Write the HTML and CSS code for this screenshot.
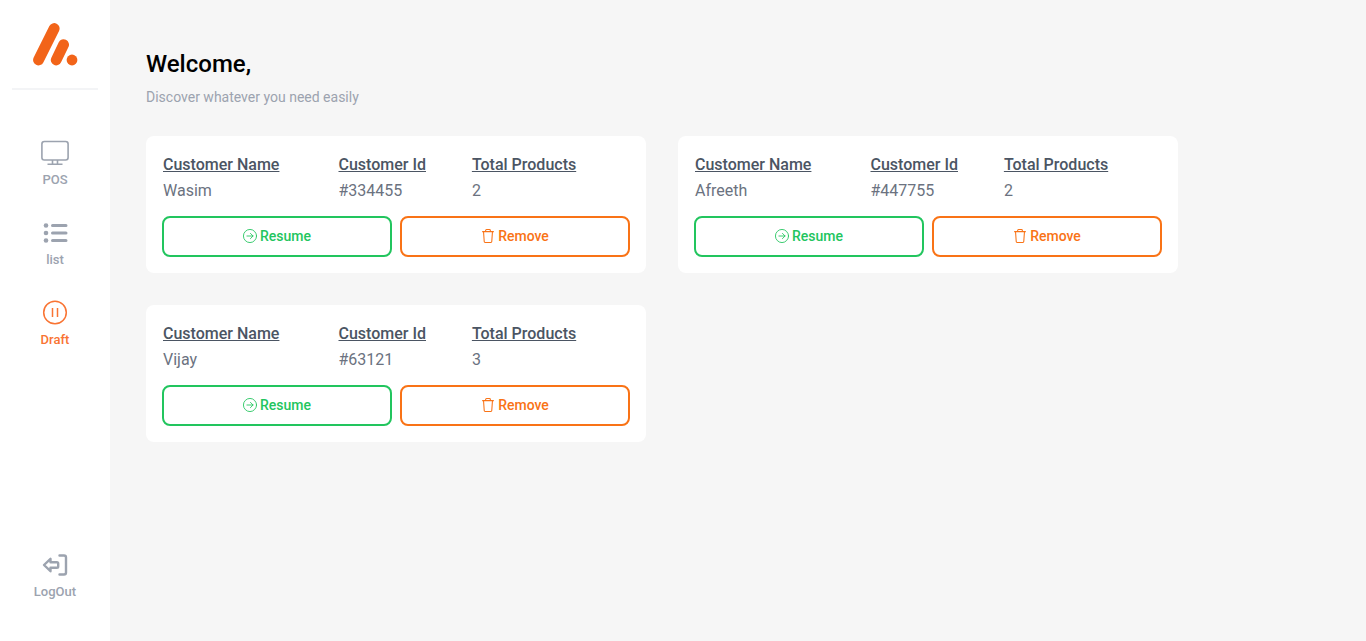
FILE: index.html
```html
<!DOCTYPE html>
<html lang="en">
<head>
<meta charset="utf-8">
<meta name="viewport" content="width=device-width, initial-scale=1">
<title>Draft</title>
<link rel="stylesheet" href="styles.css">
</head>
<body>
<svg class="sprite" aria-hidden="true">
  <symbol id="i-resume" viewBox="0 0 16 16"><g fill="none" stroke="currentColor" stroke-linecap="round" stroke-linejoin="round"><circle cx="8" cy="8" r="7.5"/><path d="M4.500 8h7M8.500 5l3 3-3 3"/></g></symbol>
  <symbol id="i-trash" viewBox="0 0 16 16"><g fill="none" stroke="currentColor" stroke-width="1.200" stroke-linecap="round" stroke-linejoin="round"><path d="M1.800 3h12.400M5.300 3V1.600a1 1 0 0 1 1-1h3.400a1 1 0 0 1 1 1V3M2.900 3l.8 11.400a1 1 0 0 0 1 1h6.600a1 1 0 0 0 1-1L13.100 3"/></g></symbol>
</svg>
<div class="app">
  <aside class="sidebar">
    <div class="brand">
      <svg class="logo" viewBox="0 0 46 44" role="img" aria-label="Logo"><g fill="none" stroke="#f26419" stroke-linecap="round" stroke-width="10.800"><path d="M6.500 37L22.200 5.500M24.200 37L31.600 21.700"/></g><circle cx="40" cy="37" r="5.400" fill="#f26419"/></svg>
    </div>
    <nav class="menu">
      <a class="item" href="#pos">
        <svg class="icon" viewBox="0 0 28 28" fill="none" stroke="currentColor" stroke-width="1.600"><rect x=".9" y="2.500" width="26.200" height="18.500" rx="2.500"/><path d="M11.500 21v4M16.500 21v4M6.500 25.200h15"/></svg>
        <span>POS</span>
      </a>
      <a class="item" href="#list">
        <svg class="icon" viewBox="0 0 28 28" fill="currentColor"><circle cx="5" cy="6.500" r="2.300"/><circle cx="5" cy="14" r="2.300"/><circle cx="5" cy="21.500" r="2.300"/><path d="M11.500 6.500h13.500M11.500 14h13.500M11.500 21.500h13.500" stroke="currentColor" stroke-width="3" stroke-linecap="round"/></svg>
        <span>list</span>
      </a>
      <a class="item active" href="#draft" aria-current="page">
        <svg class="icon" viewBox="0 0 28 28" fill="none" stroke="currentColor" stroke-width="1.500"><circle cx="14" cy="13.500" r="11.300"/><path d="M11.500 9v9M16.500 9v9"/></svg>
        <span>Draft</span>
      </a>
    </nav>
    <a class="item logout" href="#logout">
      <svg class="icon" viewBox="0 0 28 28" fill="none" stroke="currentColor" stroke-width="2.400" stroke-linejoin="round"><path d="M3 14l6.500-6.200v3.500h6.400a1.300 1.300 0 0 1 1.300 1.300v2.800a1.300 1.300 0 0 1-1.300 1.300H9.500v3.500z"/><path d="M18.500 4.500h4.500a2 2 0 0 1 2 2v15a2 2 0 0 1-2 2h-4.500" stroke-linecap="round"/></svg>
      <span>LogOut</span>
    </a>
  </aside>
  <main class="content">
    <h1 class="title">Welcome,</h1>
    <p class="subtitle">Discover whatever you need easily</p>
    <section class="cards">
      <article class="card">
        <table class="details">
          <thead><tr><th class="name">Customer Name</th><th class="id">Customer Id</th><th>Total Products</th></tr></thead>
          <tbody><tr><td>Wasim</td><td>#334455</td><td>2</td></tr></tbody>
        </table>
        <div class="actions">
          <button class="btn resume" type="button"><svg class="glyph"><use href="#i-resume"/></svg>Resume</button>
          <button class="btn remove" type="button"><svg class="glyph"><use href="#i-trash"/></svg>Remove</button>
        </div>
      </article>
      <article class="card">
        <table class="details">
          <thead><tr><th class="name">Customer Name</th><th class="id">Customer Id</th><th>Total Products</th></tr></thead>
          <tbody><tr><td>Afreeth</td><td>#447755</td><td>2</td></tr></tbody>
        </table>
        <div class="actions">
          <button class="btn resume" type="button"><svg class="glyph"><use href="#i-resume"/></svg>Resume</button>
          <button class="btn remove" type="button"><svg class="glyph"><use href="#i-trash"/></svg>Remove</button>
        </div>
      </article>
      <article class="card">
        <table class="details">
          <thead><tr><th class="name">Customer Name</th><th class="id">Customer Id</th><th>Total Products</th></tr></thead>
          <tbody><tr><td>Vijay</td><td>#63121</td><td>3</td></tr></tbody>
        </table>
        <div class="actions">
          <button class="btn resume" type="button"><svg class="glyph"><use href="#i-resume"/></svg>Resume</button>
          <button class="btn remove" type="button"><svg class="glyph"><use href="#i-trash"/></svg>Remove</button>
        </div>
      </article>
    </section>
  </main>
</div>
</body>
</html>
```
FILE: styles.css
```css
* { box-sizing: border-box; }

body {
  margin: 0;
  font-family: Roboto, "Liberation Sans", sans-serif;
  font-size: 16px;
  line-height: 24px;
  color: #6b7280;
  background: #f6f6f6;
}

.sprite { display: none; }

.app {
  display: flex;
  min-height: 100vh;
}

.sidebar {
  flex: none;
  display: flex;
  flex-direction: column;
  width: 110px;
  padding: 0 12px 39px;
  background: #fff;
}

.brand {
  display: flex;
  justify-content: center;
  padding: 23px 0 21px;
  border-bottom: 2px solid #f3f4f6;
}

.logo { width: 46px; height: 44px; }

.menu {
  display: flex;
  flex-direction: column;
  gap: 29px;
  padding-top: 49px;
}

.item {
  display: flex;
  flex-direction: column;
  align-items: center;
  gap: 3px;
  font-size: 13px;
  line-height: 20px;
  font-weight: 500;
  color: #9ca3af;
  text-decoration: none;
}

.item.active { color: #f97433; }

.icon { width: 28px; height: 28px; }

.logout { margin-top: auto; }

.content {
  flex: 1;
  min-width: 0;
  padding: 48px 36px;
}

.title {
  margin: 0;
  font-size: 24px;
  line-height: 32px;
  font-weight: 500;
  color: #000;
}

.subtitle {
  margin: 7px 0 29px;
  font-size: 14px;
  line-height: 20px;
  color: #9ca3af;
}

.cards {
  display: grid;
  grid-template-columns: repeat(auto-fill, minmax(min(100%, 420px), 1fr));
  gap: 32px;
  max-width: 1032px;
}

.card {
  padding: 16px;
  background: #fff;
  border-radius: 8px;
}

.details {
  width: 100%;
  border-collapse: collapse;
  text-align: left;
}

.details th,
.details td { padding: 1px; }

.details th {
  font-weight: 500;
  color: #4b5563;
  text-decoration: underline;
}

.details .name { width: 37.5%; }
.details .id { width: 28.5%; }

.actions {
  display: flex;
  gap: 8px;
  margin-top: 12px;
}

.btn {
  flex: 1;
  display: flex;
  align-items: center;
  justify-content: center;
  gap: 3px;
  padding: 8px 0 9px;
  border: 2px solid;
  border-radius: 8px;
  background: #fff;
  font: 500 14px/20px Roboto, "Liberation Sans", sans-serif;
  cursor: pointer;
}

.resume { color: #22c55e; }
.remove { color: #f97316; }

.glyph { width: 14px; height: 14px; }
```
